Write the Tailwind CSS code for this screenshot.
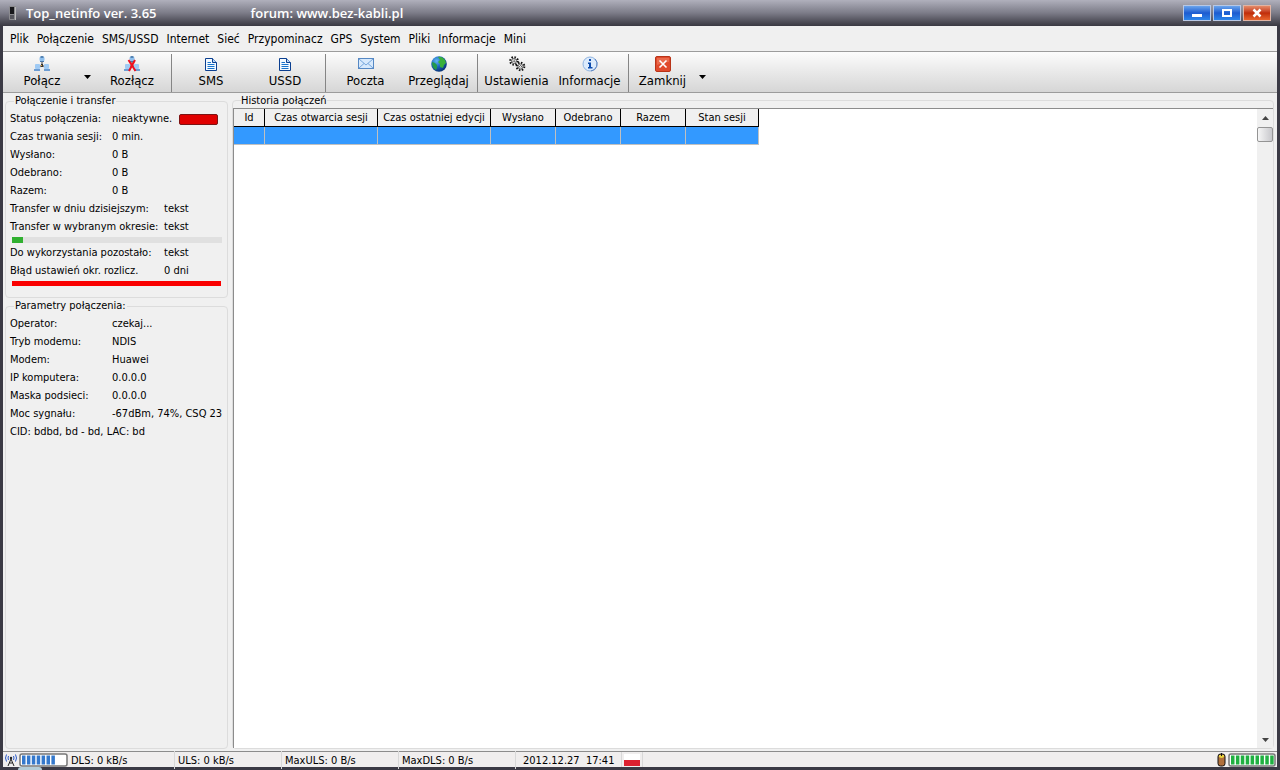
<!DOCTYPE html>
<html lang="pl">
<head>
<meta charset="utf-8">
<title>Top_netinfo ver. 3.65</title>
<script src="https://cdn.jsdelivr.net/npm/@tailwindcss/browser@4"></script>
</head>
<body class="flex h-screen flex-col overflow-hidden bg-[#3b3a45] font-['Tahoma','DejaVu_Sans_Condensed','Noto_Sans',sans-serif] text-[11px] leading-[18px] text-black">

<header class="flex h-[26px] shrink-0 items-center bg-linear-to-b from-[#b0b0bc] via-[#7c7c88] to-[#3a3942] pr-[9px] pl-2">
  <svg class="h-4 w-[10px]" viewBox="0 0 10 16" aria-hidden="true">
    <rect x="1" y="1" width="7" height="14" rx="1" fill="#8a8a8e"/><rect x="2" y="2" width="4" height="7" fill="#17171b"/><rect x="2" y="10" width="4" height="4" fill="#55555c"/><path d="M7.500 2V15" stroke="#bbb"/>
  </svg>
  <h1 class="ml-2 flex gap-[94px] font-['Trebuchet_MS','Open_Sans',sans-serif] text-[13px] font-semibold whitespace-pre text-white"><span>Top_netinfo ver. 3.65</span><span>forum: www.bez-kabli.pl</span></h1>
  <div class="ml-auto flex gap-0.5">
    <button aria-label="Minimalizuj" class="flex h-4 w-7 items-center justify-center border border-[#b9c8e4] bg-linear-to-b from-[#6ba4ec] via-[#1d5bd0] to-[#2d85ea]"><svg class="h-3 w-3" viewBox="0 0 12 12"><path d="M1 8.500H11" stroke="#fff" stroke-width="3"/></svg></button>
    <button aria-label="Maksymalizuj" class="flex h-4 w-7 items-center justify-center border border-[#b9c8e4] bg-linear-to-b from-[#6ba4ec] via-[#1d5bd0] to-[#2d85ea]"><svg class="h-3 w-3" viewBox="0 0 12 12"><rect x="2" y="3" width="8" height="6" fill="none" stroke="#fff" stroke-width="2"/></svg></button>
    <button aria-label="Zamknij okno" class="flex h-4 w-7 items-center justify-center border border-[#e0b4a4] bg-linear-to-b from-[#e48a68] via-[#c02c08] to-[#e8642c]"><svg class="h-3 w-3" viewBox="0 0 12 12"><path d="M2.500 2.500L9.500 9.500M9.500 2.500L2.500 9.500" stroke="#fff" stroke-width="2.500"/></svg></button>
  </div>
</header>

<div class="mx-[3px] flex min-h-0 flex-1 flex-col bg-[#f0f0f0]">
  <nav class="flex h-[25px] shrink-0 items-center gap-2 pl-[7px] text-[12px]">
    <button>Plik</button><button>Połączenie</button><button>SMS/USSD</button><button>Internet</button><button>Sieć</button><button>Przypominacz</button><button>GPS</button><button>System</button><button>Pliki</button><button>Informacje</button><button>Mini</button>
  </nav>

  <div role="toolbar" aria-label="Pasek narzędzi" class="flex h-[42px] shrink-0 border-y border-[#9c9c9c] bg-linear-to-b from-[#fcfcfc] to-[#d6d6d6] pl-0.5 text-[13px] leading-[18px]">
    <button class="flex w-[74px] flex-col items-center pt-1">
      <svg class="h-4 w-4" viewBox="0 0 16 16" aria-hidden="true"><g id="net"><path d="M8 6V9L4 12M8 9L12 12" stroke="#777" stroke-width="1.500" fill="none"/><rect x="5.500" y="1" width="5" height="4" rx="1" fill="#8fc0ee"/><rect x="6.500" y="0" width="3" height="2" fill="#5584b4"/><rect x="6" y="5" width="4" height="1" fill="#4a76aa"/><rect x="1" y="8" width="5" height="5" rx="1" fill="#9fcaf4"/><rect x="0" y="13" width="6" height="2" fill="#6c9cd2"/><rect x="10" y="8" width="5" height="5" rx="1" fill="#9fcaf4"/><rect x="10" y="13" width="6" height="2" fill="#6c9cd2"/><rect x="7" y="8" width="2" height="3" fill="#333"/><rect x="7" y="9" width="1" height="1" fill="#e5a83c"/></g></svg>
      <span>Połącz</span></button>
    <button aria-label="Więcej opcji połączenia" class="flex w-4 items-center justify-center pt-2.5"><svg class="h-1 w-[7px]" viewBox="0 0 7 4"><path d="M0 0H7L3.500 4Z"/></svg></button>
    <button class="flex w-[74px] flex-col items-center pt-1">
      <svg class="h-4 w-4" viewBox="0 0 16 16" aria-hidden="true"><use href="#net"/><path d="M4.500 4L11.500 15M11 4L5 15" stroke="#ee1020" stroke-width="2"/></svg>
      <span>Rozłącz</span></button>
    <span class="mx-0.5 mt-0.5 w-px bg-[#858585]"></span>
    <button class="flex w-[74px] flex-col items-center pt-1">
      <svg class="h-4 w-4" viewBox="0 0 16 16" aria-hidden="true"><g id="doc"><path d="M2.500 2.500H9.500L13.500 6.500V14.500H2.500Z" fill="#f4faff" stroke="#0b3f90"/><path d="M9.500 2.500V6.500H13.500" fill="#b9d8f8" stroke="#0b3f90"/><path d="M4.500 6.500H8M4.500 8.500H11.500M4.500 10.500H11.500M4.500 12.500H11.500" stroke="#1974cd"/></g></svg>
      <span>SMS</span></button>
    <button class="flex w-[74px] flex-col items-center pt-1">
      <svg class="h-4 w-4" viewBox="0 0 16 16" aria-hidden="true"><use href="#doc"/></svg>
      <span>USSD</span></button>
    <span class="mx-[3px] mt-0.5 w-px bg-[#858585]"></span>
    <button class="flex w-[73px] flex-col items-center pt-1">
      <svg class="h-4 w-4" viewBox="0 0 16 16" aria-hidden="true"><rect x=".5" y="2.500" width="15" height="10" fill="#d7e9fc" stroke="#5688c4"/><path d="M1 3L8 9L15 3M1 12L6 7.500M15 12L10 7.500" fill="none" stroke="#76a6dc"/></svg>
      <span>Poczta</span></button>
    <button class="flex w-[73px] flex-col items-center pt-1">
      <svg class="h-4 w-4" viewBox="0 0 16 16" aria-hidden="true"><defs><radialGradient id="sea" cx=".35" cy=".3" r=".8"><stop offset="0" stop-color="#60b8f4"/><stop offset=".5" stop-color="#1861b8"/><stop offset="1" stop-color="#062a68"/></radialGradient></defs><circle cx="8" cy="8" r="7.800" fill="url(#sea)"/><path d="M7 1Q11 0 14 4L15 7L13 9L12 12L9 11L9 8L7 6L9 4Z" fill="#39b03a"/><path d="M1 6L4 7L6 9L6 12L5 14Q1 12 1 6Z" fill="#239a4a"/></svg>
      <span>Przeglądaj</span></button>
    <span class="mx-0.5 mt-0.5 w-px bg-[#858585]"></span>
    <button class="flex w-[73px] flex-col items-center pt-1">
      <svg class="h-4 w-[18px]" viewBox="0 0 18 16" aria-hidden="true"><g fill="none" stroke="#111"><circle cx="6" cy="5" r="3.800" stroke-width="2" stroke-dasharray="1.500 1.480"/><circle cx="6" cy="5" r="2.500" stroke-width=".6"/><circle cx="6" cy="5" r="1" stroke-dasharray="1 1"/><circle cx="12.500" cy="10.500" r="3.800" stroke-width="2" stroke-dasharray="1.500 1.480"/><circle cx="12.500" cy="10.500" r="2.500" stroke-width=".6"/><circle cx="12.500" cy="10.500" r="1" stroke-dasharray="1 1"/></g></svg>
      <span>Ustawienia</span></button>
    <button class="flex w-[73px] flex-col items-center pt-1">
      <svg class="h-4 w-4" viewBox="0 0 16 16" aria-hidden="true"><circle cx="8" cy="8" r="7" fill="#dcebfc" stroke="#90b4e0"/><path d="M13 3A7 7 0 0 1 9 15" fill="none" stroke="#5a82c0"/><path d="M7 3H9V5H7ZM6 6.500H9V11H10.500V12.500H6V11H7V8H6Z" fill="#0d4cae"/></svg>
      <span>Informacje</span></button>
    <span class="mx-0.5 mt-0.5 w-px bg-[#858585]"></span>
    <button class="flex w-[63px] flex-col items-center pt-1">
      <svg class="h-4 w-4" viewBox="0 0 16 16" aria-hidden="true"><rect x=".5" y=".5" width="15" height="15" rx="1.500" fill="#e04a2c" stroke="#b83418"/><path d="M2 2H14V6Q8 6 2 9Z" fill="#f08062" opacity=".6"/><path d="M4.500 4.500L11.500 11.500M11.500 4.500L4.500 11.500" stroke="#fff" stroke-width="1.600"/></svg>
      <span>Zamknij</span></button>
    <button aria-label="Więcej opcji zamykania" class="flex w-4 items-center justify-center pt-2.5"><svg class="h-1 w-[7px]" viewBox="0 0 7 4"><path d="M0 0H7L3.500 4Z"/></svg></button>
  </div>

  <main class="flex min-h-0 flex-1 gap-1 pr-[3px] pb-0.5 pl-0.5">
    <aside class="flex w-[223px] shrink-0 flex-col">
      <fieldset class="h-[205px] shrink-0 rounded-sm border border-[#dcdcdc] pt-px pl-1">
        <legend class="ml-1 px-px leading-4">Połączenie i transfer</legend>
        <dl class="grid grid-cols-[102px_1fr] whitespace-nowrap">
          <dt>Status połączenia:</dt><dd class="flex items-center gap-[7px]"><span>nieaktywne.</span><span class="h-[11px] w-[39px] rounded-xs border border-[#7c1414] bg-[#e00000]"></span></dd>
          <dt>Czas trwania sesji:</dt><dd>0 min.</dd>
          <dt>Wysłano:</dt><dd>0 B</dd>
          <dt>Odebrano:</dt><dd>0 B</dd>
          <dt>Razem:</dt><dd>0 B</dd>
        </dl>
        <dl class="grid grid-cols-[154px_1fr] whitespace-nowrap">
          <dt>Transfer w dniu dzisiejszym:</dt><dd>tekst</dd>
          <dt>Transfer w wybranym okresie:</dt><dd>tekst</dd>
        </dl>
        <div class="mt-px mr-[5px] mb-px ml-0.5 h-1.5 bg-[#e0e0e0]"><div class="h-full bg-[#30b030]" style="width:5%"></div></div>
        <dl class="grid grid-cols-[154px_1fr] whitespace-nowrap">
          <dt>Do wykorzystania pozostało:</dt><dd>tekst</dd>
          <dt>Błąd ustawień okr. rozlicz.</dt><dd>0 dni</dd>
        </dl>
        <div class="mt-px mr-1.5 ml-0.5 h-[5px] bg-[#fa0000]"></div>
      </fieldset>
      <fieldset class="flex-1 rounded-sm border border-[#dcdcdc] pt-px pl-1">
        <legend class="ml-1 px-px leading-4">Parametry połączenia:</legend>
        <dl class="grid grid-cols-[102px_1fr] whitespace-nowrap">
          <dt>Operator:</dt><dd>czekaj...</dd>
          <dt>Tryb modemu:</dt><dd>NDIS</dd>
          <dt>Modem:</dt><dd>Huawei</dd>
          <dt>IP komputera:</dt><dd>0.0.0.0</dd>
          <dt>Maska podsieci:</dt><dd>0.0.0.0</dd>
          <dt>Moc sygnału:</dt><dd>-67dBm, 74%, CSQ 23</dd>
        </dl>
        <p>CID: bdbd, bd - bd, LAC: bd</p>
      </fieldset>
    </aside>

    <fieldset class="flex min-w-0 flex-1 flex-col rounded-sm border border-[#dcdcdc]">
      <legend class="ml-2 leading-[15px]">Historia połączeń</legend>
      <div class="flex h-full border-t border-l border-[#8c8c8c] bg-white">
        <div class="flex-1">
          <table class="w-[525px] table-fixed border-separate border-spacing-0">
            <colgroup><col class="w-[31px]"><col class="w-[113px]"><col class="w-[113px]"><col class="w-[65px]"><col class="w-[65px]"><col class="w-[65px]"><col class="w-[73px]"></colgroup>
            <thead><tr class="h-[18px] bg-[#f0f0f0] leading-4 whitespace-nowrap *:border-r *:border-b *:border-black *:px-0 *:pt-px *:pb-0 *:font-normal">
              <th>Id</th><th>Czas otwarcia sesji</th><th>Czas ostatniej edycji</th><th>Wysłano</th><th>Odebrano</th><th>Razem</th><th>Stan sesji</th>
            </tr></thead>
            <tbody><tr class="h-[18px] bg-[#3399ff] *:border-r *:border-b *:border-[#c0c0c0] *:p-0"><td></td><td></td><td></td><td></td><td></td><td></td><td></td></tr></tbody>
          </table>
        </div>
        <div class="flex w-4 flex-col items-center bg-[#f0f0f0]">
          <button aria-label="Przewiń w górę" class="flex h-[18px] w-full items-center justify-center"><svg class="h-1 w-[7px]" viewBox="0 0 7 4"><path d="M0 4H7L3.500 0Z" fill="#444"/></svg></button>
          <div class="h-[15px] w-4 rounded-xs border border-[#949494] bg-linear-to-r from-[#f6f6f6] to-[#c8c8cc]"></div>
          <button aria-label="Przewiń w dół" class="mt-auto flex h-4 w-full items-center justify-center"><svg class="h-1 w-[7px]" viewBox="0 0 7 4"><path d="M0 0H7L3.500 4Z" fill="#444"/></svg></button>
        </div>
      </div>
    </fieldset>
  </main>

  <footer class="flex h-4 shrink-0 items-center border-t border-[#8c8c8c] bg-[#f0eeee] leading-4 whitespace-nowrap">
    <div class="flex w-[65px] items-center gap-0.5 pl-0.5">
      <svg class="h-3 w-3" viewBox="0 0 12 12" aria-hidden="true"><path d="M6 5L3 12M6 5L9 12M4.500 9H7.500" stroke="#222" fill="none"/><circle cx="6" cy="4" r="1.200" fill="#222"/><path d="M3.500 2Q2.500 4 3.500 6M8.500 2Q9.500 4 8.500 6M1.500 .5Q-.5 4 1.500 7.500M10.500 .5Q12.500 4 10.500 7.500" stroke="#2858c8" fill="none"/></svg>
      <svg class="h-[14px] w-[49px]" viewBox="0 0 49 14" role="img" aria-label="Siła sygnału"><rect x="1" y="1" width="47" height="12" rx="2" fill="#fff" stroke="#777" stroke-width="1.500"/><path d="M3 7H36" stroke="#3478cc" stroke-width="9" stroke-dasharray="3.500 1.400"/></svg>
    </div>
    <span class="w-[106px] pt-0.5 pl-[3px]">DLS: 0 kB/s</span>
    <span class="w-[107px] border-l border-[#d8d8d8] pt-0.5 pl-[3px]">ULS: 0 kB/s</span>
    <span class="w-[117px] border-l border-[#d8d8d8] pt-0.5 pl-[3px]">MaxULS: 0 B/s</span>
    <span class="w-[117px] border-l border-[#d8d8d8] pt-0.5 pl-[3px]">MaxDLS: 0 B/s</span>
    <span class="w-[106px] border-l border-[#d8d8d8] pt-0.5 pl-[7px] whitespace-pre">2012.12.27  17:41</span>
    <span class="flex h-full w-[22px] items-center border-x border-[#d8d8d8] pl-0.5"><svg class="h-3 w-4" viewBox="0 0 16 12" role="img" aria-label="Polski"><rect width="16" height="6" fill="#fff"/><rect y="6" width="16" height="6" fill="#dc2030"/></svg></span>
    <div class="ml-auto flex items-center gap-0.5 pr-px">
      <svg class="h-[14px] w-[9px]" viewBox="0 0 9 14" aria-hidden="true"><rect x="1" y="1" width="7" height="12" rx="2.500" fill="#b0703c" stroke="#111"/><path d="M2 4Q4.500 6 7 4V2H2Z" fill="#e8d23c"/><path d="M4.500 0V3" stroke="#111"/></svg>
      <svg class="h-[14px] w-12" viewBox="0 0 48 14" role="img" aria-label="Bateria"><rect x="1" y="1" width="46" height="12" rx="2" fill="#fff" stroke="#777" stroke-width="1.500"/><path d="M3 7H46" stroke="#1fb040" stroke-width="9" stroke-dasharray="3.500 1.400"/></svg>
    </div>
  </footer>
</div>
<div class="h-[3px] shrink-0 pl-[18px]"><div class="h-[3px] w-6 rounded-t-full bg-[#b4cdd8]"></div></div>
</body>
</html>
